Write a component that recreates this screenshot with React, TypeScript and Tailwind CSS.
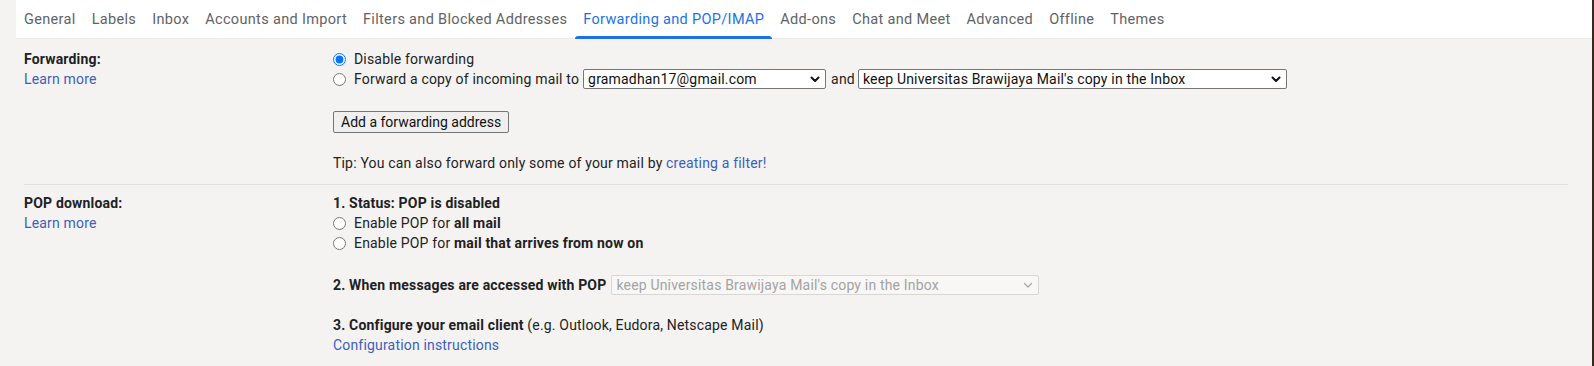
import React from "react";

const tabs = [
  "General",
  "Labels",
  "Inbox",
  "Accounts and Import",
  "Filters and Blocked Addresses",
  "Forwarding and POP/IMAP",
  "Add-ons",
  "Chat and Meet",
  "Advanced",
  "Offline",
  "Themes",
];

function Chevron({ disabled }: { disabled?: boolean }) {
  return (
    <svg width="10" height="7" viewBox="0 0 10 7" className="shrink-0">
      <polyline
        points="1.5,1.5 5,5 8.5,1.5"
        fill="none"
        stroke={disabled ? "#a8a8a8" : "#111"}
        strokeWidth={disabled ? 1.3 : 2}
        strokeLinecap="round"
        strokeLinejoin="round"
      />
    </svg>
  );
}

function Select({
  value,
  width,
  disabled,
}: {
  value: string;
  width: string;
  disabled?: boolean;
}) {
  return (
    <div
      className={
        "flex h-[20px] shrink-0 items-center justify-between rounded-[2px] border pl-[4px] pr-[5px] " +
        width +
        (disabled
          ? " border-[#d9d7d6] bg-[#f8f7f6] text-[#a3a3a3]"
          : " border-[#767676] bg-white text-[#111]")
      }
    >
      <span className="truncate leading-[18px]">{value}</span>
      <Chevron disabled={disabled} />
    </div>
  );
}

function Radio({ checked }: { checked?: boolean }) {
  return (
    <input
      type="radio"
      readOnly
      checked={!!checked}
      className="m-0 h-[13px] w-[13px] shrink-0"
    />
  );
}

export default function App() {
  return (
    <div
      className="flex h-[366px] w-[1594px] overflow-hidden bg-[#f5f3f2] text-[14px] leading-[20px] tracking-[0.18px] text-[#222]"
      style={{ fontFamily: "Roboto, 'Liberation Sans', Arial, sans-serif" }}
    >
      <div className="flex min-w-0 flex-1 flex-col pl-4">
        {/* Tabs */}
        <div className="flex h-[39px] shrink-0 items-stretch border-b border-[#ecebea] bg-white">
          {tabs.map((t) => {
            const active = t === "Forwarding and POP/IMAP";
            return (
              <div
                key={t}
                className={
                  "relative flex items-center px-2 pt-px text-[14.5px] tracking-[0.33px] " +
                  (active ? "text-[#1a73e8]" : "text-[#5f6368]")
                }
              >
                {t}
                {active && (
                  <div className="absolute bottom-[-1px] left-0 right-0 h-[3px] rounded-t-[3px] bg-[#1a73e8]" />
                )}
              </div>
            );
          })}
        </div>

        {/* Content */}
        <div className="flex flex-col pl-2 pr-6">
          {/* Forwarding */}
          <div className="grid grid-cols-[309px_1fr] border-b border-[#e3e1e0] pb-[11px] pt-[10px]">
            <div className="flex flex-col">
              <span className="font-bold text-[#202124]">Forwarding:</span>
              <span className="text-[#3c5fbd]">Learn more</span>
            </div>
            <div className="flex flex-col">
              <label className="flex h-[20px] items-center gap-[8px]">
                <Radio checked />
                <span>Disable forwarding</span>
              </label>
              <div className="flex h-[20px] items-center">
                <label className="flex items-center gap-[8px]">
                  <Radio />
                  <span>Forward a copy of incoming mail to</span>
                </label>
                <div className="ml-[4px]">
                  <Select value="gramadhan17@gmail.com" width="w-[243px]" />
                </div>
                <span className="ml-[5px] mr-[3px]">and</span>
                <Select
                  value="keep Universitas Brawijaya Mail's copy in the Inbox"
                  width="w-[429px]"
                />
              </div>
              <div className="mt-[22px]">
                <button className="h-[22px] rounded-[2px] border border-[#767676] bg-[#efefef] px-[7px] text-[14px] leading-[20px] tracking-normal text-[#111]">
                  Add a forwarding address
                </button>
              </div>
              <div className="mt-[20px]">
                Tip: You can also forward only some of your mail by{" "}
                <span className="text-[#3c5fbd]">creating a filter!</span>
              </div>
            </div>
          </div>

          {/* POP download */}
          <div className="grid grid-cols-[309px_1fr] pt-[8px]">
            <div className="flex flex-col">
              <span className="font-bold text-[#202124]">POP download:</span>
              <span className="text-[#3c5fbd]">Learn more</span>
            </div>
            <div className="flex flex-col">
              <div className="font-bold text-[#202124]">1. Status: POP is disabled</div>
              <label className="flex h-[20px] items-center gap-[8px]">
                <Radio />
                <span>
                  Enable POP for <b className="text-[#202124]">all mail</b>
                </span>
              </label>
              <label className="flex h-[20px] items-center gap-[8px]">
                <Radio />
                <span>
                  Enable POP for{" "}
                  <b className="text-[#202124]">mail that arrives from now on</b>
                </span>
              </label>
              <div className="mt-[22px] flex h-[20px] items-center gap-[5px]">
                <span className="font-bold text-[#202124]">
                  2. When messages are accessed with POP
                </span>
                <Select
                  value="keep Universitas Brawijaya Mail's copy in the Inbox"
                  width="w-[428px]"
                  disabled
                />
              </div>
              <div className="mt-[20px]">
                <b className="text-[#202124]">3. Configure your email client</b>{" "}
                (e.g. Outlook, Eudora, Netscape Mail)
              </div>
              <div className="text-[#3c5fbd]">Configuration instructions</div>
            </div>
          </div>
        </div>
      </div>
      <div className="w-[2px] shrink-0 bg-[#3a281e]" />
    </div>
  );
}
